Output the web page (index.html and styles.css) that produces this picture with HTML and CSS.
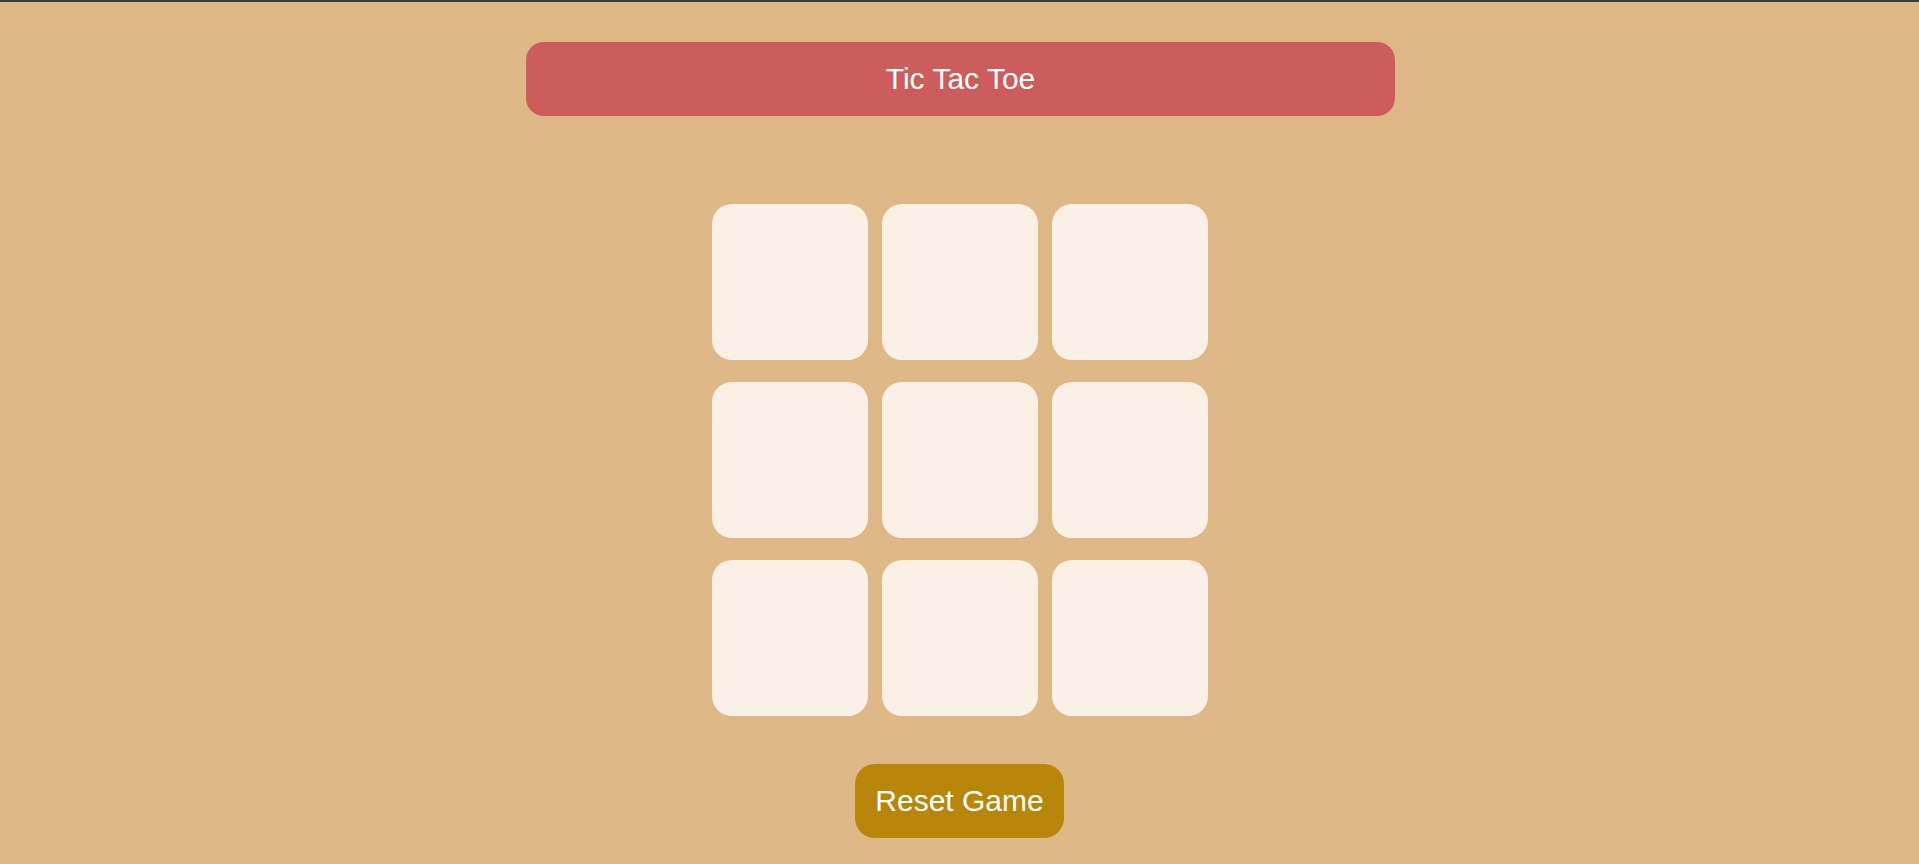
FILE: index.html
```html
<!DOCTYPE html>
<html lang="en">
<head>
<meta charset="utf-8">
<title>Tic Tac Toe</title>
<link rel="stylesheet" href="styles.css">
</head>
<body>
<div class="topbar"></div>
<main class="page">
  <h1 class="title">Tic Tac Toe</h1>
  <div class="board">
    <div class="cell"></div>
    <div class="cell"></div>
    <div class="cell"></div>
    <div class="cell"></div>
    <div class="cell"></div>
    <div class="cell"></div>
    <div class="cell"></div>
    <div class="cell"></div>
    <div class="cell"></div>
  </div>
  <button class="reset">Reset Game</button>
</main>
</body>
</html>
```
FILE: styles.css
```css
html, body {
  margin: 0;
  padding: 0;
}
body {
  background: #deb887;
  font-family: "Liberation Sans", Arial, sans-serif;
  min-height: 864px;
}
.topbar {
  height: 2px;
  background: #3b3b3b;
}
.page {
  display: flex;
  flex-direction: column;
  align-items: center;
  padding-top: 40px;
}
.title {
  box-sizing: border-box;
  width: 869px;
  height: 74px;
  margin: 0 0 0 2px;
  padding: 0;
  background: #cd5c5c;
  color: #ffffff;
  border-radius: 18px;
  font-weight: normal;
  font-size: 30px;
  line-height: 74px;
  text-align: center;
}
.board {
  display: grid;
  grid-template-columns: repeat(3, 156px);
  grid-template-rows: repeat(3, 156px);
  column-gap: 14px;
  row-gap: 22px;
  margin-top: 88px;
}
.cell {
  background: #faf0e6;
  border-radius: 20px;
}
.reset {
  margin-top: 48px;
  padding: 20px;
  border: none;
  border-radius: 20px;
  background: #b8860b;
  color: #ffffff;
  font-family: "Liberation Sans", Arial, sans-serif;
  font-size: 30px;
  line-height: 34px;
}
```
